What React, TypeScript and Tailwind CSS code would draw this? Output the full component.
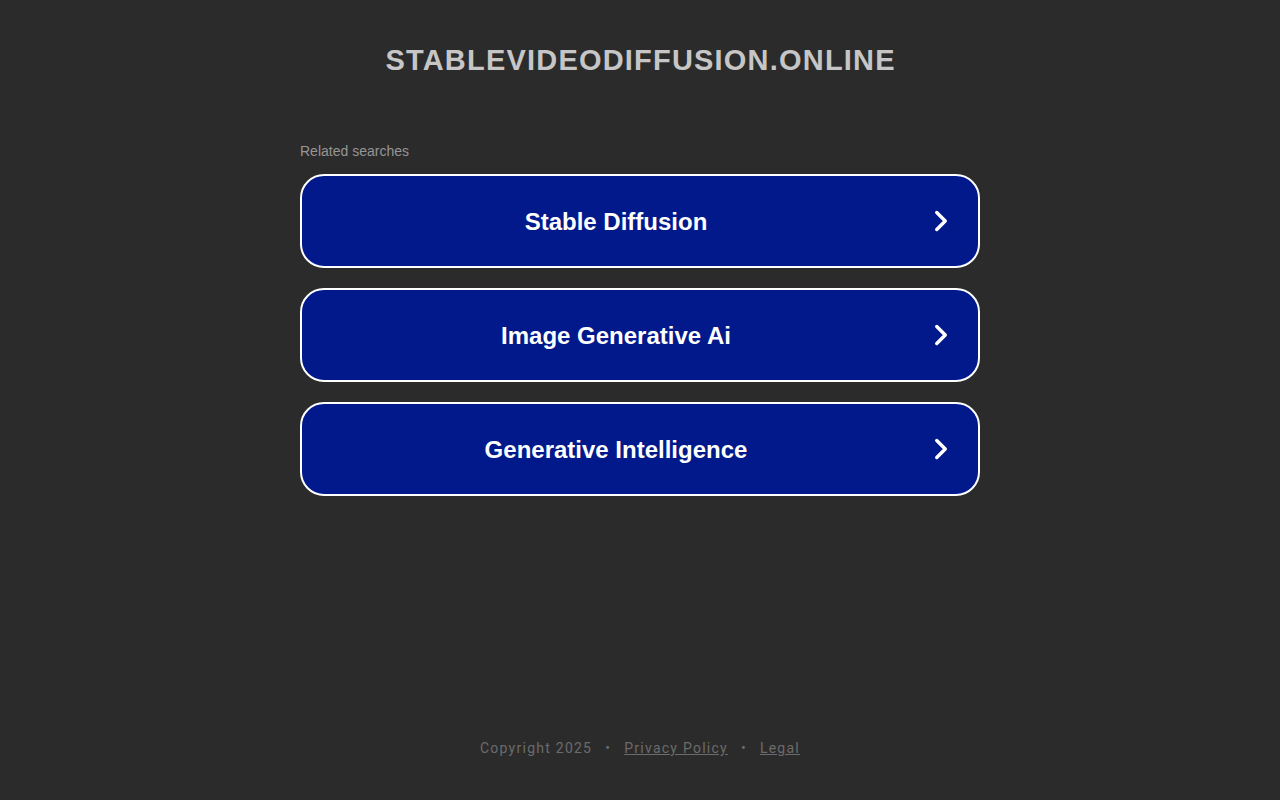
import React from "react";

const items = ["Stable Diffusion", "Image Generative Ai", "Generative Intelligence"];

function Chevron() {
  return (
    <svg width="34" height="34" viewBox="0 0 24 24" fill="none" stroke="white" strokeWidth="2.4" strokeLinecap="round" strokeLinejoin="round">
      <path d="m9 18 6-6-6-6" />
    </svg>
  );
}

export default function App() {
  return (
    <div className="relative min-h-[800px] w-full bg-[#2b2b2b] flex flex-col items-center" style={{ fontFamily: '"Liberation Sans", Arial, sans-serif' }}>
      <h1 className="mt-[42px] pl-[1.2px] text-[29px] leading-[37px] font-bold uppercase tracking-[1.2px] text-[#c6c6c6]" style={{ fontFamily: '"Liberation Sans", Arial, sans-serif' }}>
        stablevideodiffusion.online
      </h1>
      <div className="mt-[64px] w-[680px] flex flex-col">
        <div className="text-[14px] leading-[16px] text-[#969696] mb-[15px]">Related searches</div>
        <div className="flex flex-col gap-[20px]">
          {items.map((t) => (
            <a key={t} href="#" className="flex items-center h-[94px] rounded-[24px] border-2 border-white bg-[#01198a] pl-[13px] pr-[13px] no-underline">
              <span className="flex-1 text-center text-[24px] font-bold text-white leading-[28px] pt-[2px]">{t}</span>
              <span className="w-12 flex items-center justify-center pb-[1px]"><Chevron /></span>
            </a>
          ))}
        </div>
      </div>
      <footer className="absolute top-[738px] left-0 right-0 flex items-center justify-center text-[14px] tracking-[1.25px] text-[#6b6b6b]" style={{ fontFamily: 'Roboto, "Liberation Sans", sans-serif' }}>
        <span>Copyright 2025</span>
        <span className="mx-[13px]">•</span>
        <a href="#" className="underline">Privacy Policy</a>
        <span className="mx-[13px]">•</span>
        <a href="#" className="underline">Legal</a>
      </footer>
    </div>
  );
}
